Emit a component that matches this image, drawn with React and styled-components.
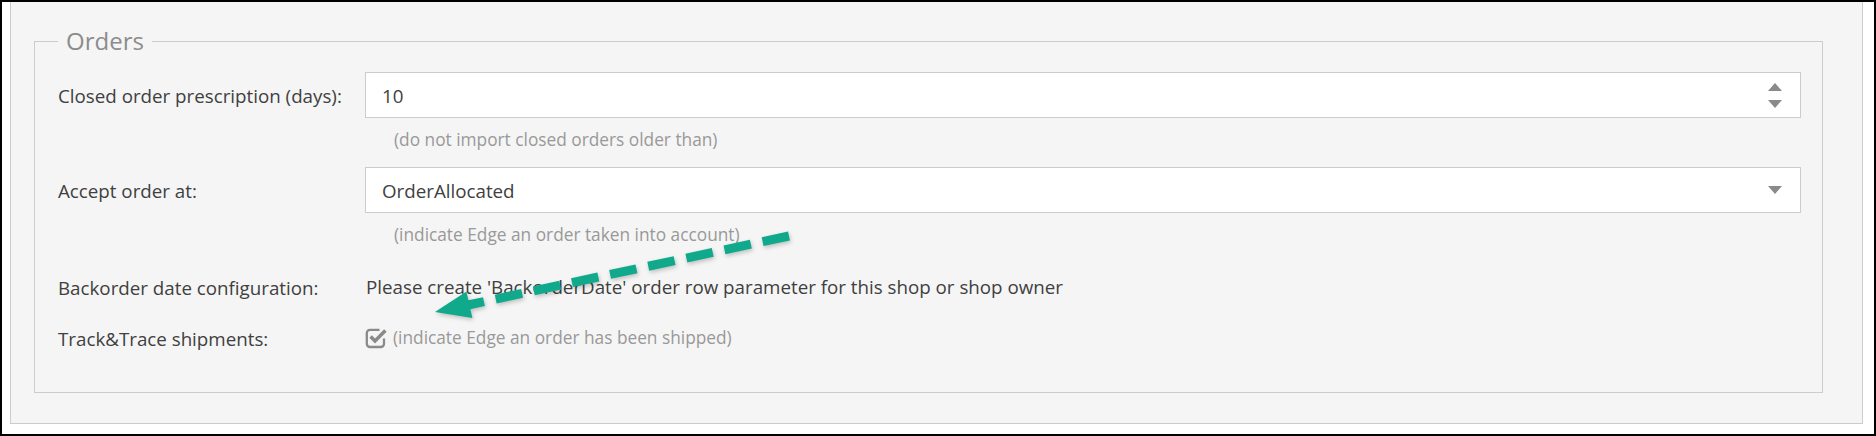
import React from 'react';
import styled, { createGlobalStyle } from 'styled-components';

const GlobalStyle = createGlobalStyle`
  body {
    margin: 0;
    background: #fff;
    font-family: 'Open Sans', 'Liberation Sans', sans-serif;
  }
`;

const rows = [
  { label: 'Closed order prescription (days):', value: '10', kind: 'number', help: '(do not import closed orders older than)' },
  { label: 'Accept order at:', value: 'OrderAllocated', kind: 'select', help: '(indicate Edge an order taken into account)' },
];

const CheckIcon = () => (
  <svg width="22" height="21" viewBox="0 0 22 21">
    <path d="M14.5 1.8 H5 a3.2 3.2 0 0 0 -3.2 3.2 v10.8 a3.2 3.2 0 0 0 3.2 3.2 h10.8 a3.2 3.2 0 0 0 3.2 -3.2 v-5.3"
      stroke="#8a8a8a" strokeWidth="2.3" fill="none" />
    <path d="M5.6 8.6 L10 13 L20.4 2.6" stroke="#8a8a8a" strokeWidth="3.6" fill="none" />
  </svg>
);

const Arrow = () => (
  <Overlay width="1876" height="436" viewBox="0 0 1876 436">
    <line x1="789" y1="236" x2="468" y2="305" stroke="#10a98b" strokeWidth="9"
      strokeDasharray="27 12" strokeLinecap="butt" />
    <polygon points="435,312 466.4,291.5 472.4,318" fill="#10a98b" />
  </Overlay>
);

export default function App() {
  return (
    <>
      <GlobalStyle />
      <Frame>
        <Panel>
          <Fieldset>
            <Legend>Orders</Legend>

            {rows.map((row, i) => (
              <Row key={row.label} $space={i === 0 ? 0 : 15}>
                <Label $tall>{row.label}</Label>
                <Field>
                  <InputBox>
                    <Value>{row.value}</Value>
                    {row.kind === 'number'
                      ? <Spinner><Up /><Down /></Spinner>
                      : <Spinner><Down /></Spinner>}
                  </InputBox>
                  <Help>{row.help}</Help>
                </Field>
              </Row>
            ))}

            <Row $space={28}>
              <Label>Backorder date configuration:</Label>
              <Text>Please create 'BackorderDate' order row parameter for this shop or shop owner</Text>
            </Row>

            <Row $space={27}>
              <Label>Track&amp;Trace shipments:</Label>
              <CheckLine>
                <CheckIcon />
                <Help as="span" $inline>(indicate Edge an order has been shipped)</Help>
              </CheckLine>
            </Row>
          </Fieldset>
        </Panel>
        <Arrow />
      </Frame>
    </>
  );
}

const Frame = styled.div`
  position: relative;
  width: 1876px;
  height: 436px;
  box-sizing: border-box;
  border: 2px solid #000;
  background: #fff;
  display: flex;
  flex-direction: column;
  overflow: hidden;
`;

const Panel = styled.div`
  flex: 1;
  display: flex;
  flex-direction: column;
  margin: 0 11px 10px 8px;
  padding: 22px 39px 30px 23px;
  background: #f5f5f5;
  border: 1px solid #cccccc;
  border-top: none;
`;

const Fieldset = styled.fieldset`
  flex: 1;
  margin: 0;
  min-width: 0;
  padding: 14px 21px 0 23px;
  border: 1px solid #cccccc;
`;

const Legend = styled.legend`
  padding: 0 8px;
  font-size: 24px;
  line-height: 34px;
  color: #8c8c8c;
`;

const Row = styled.div`
  display: grid;
  grid-template-columns: 307px 1fr;
  margin-top: ${p => p.$space}px;
  align-items: center;
`;

const Label = styled.div`
  display: flex;
  align-items: center;
  align-self: start;
  height: ${p => (p.$tall ? '46px' : '24px')};
  font-size: 18.75px;
  color: #404040;
  white-space: nowrap;
`;

const Field = styled.div`
  display: flex;
  flex-direction: column;
`;

const InputBox = styled.div`
  display: flex;
  align-items: center;
  height: 46px;
  box-sizing: border-box;
  padding: 0 18px 0 16px;
  background: #fff;
  border: 1px solid #cccccc;
`;

const Value = styled.span`
  flex: 1;
  font-size: 18.75px;
  color: #404040;
`;

const Spinner = styled.div`
  display: flex;
  flex-direction: column;
  gap: 9px;
`;

const Up = styled.span`
  width: 0;
  height: 0;
  border-left: 7.5px solid transparent;
  border-right: 7.5px solid transparent;
  border-bottom: 8px solid #8a8a8a;
`;

const Down = styled.span`
  width: 0;
  height: 0;
  border-left: 7.5px solid transparent;
  border-right: 7.5px solid transparent;
  border-top: 8px solid #8a8a8a;
`;

const Help = styled.div`
  margin-top: ${p => (p.$inline ? 0 : 10)}px;
  padding-left: ${p => (p.$inline ? 0 : 29)}px;
  font-size: 17.3px;
  line-height: 24px;
  color: #999;
`;

const Text = styled.div`
  padding-left: 1px;
  font-size: 18.75px;
  line-height: 24px;
  color: #404040;
`;

const CheckLine = styled.div`
  display: flex;
  align-items: center;
  gap: 6px;
  height: 24px;
`;

const Overlay = styled.svg`
  position: absolute;
  top: -2px;
  left: -2px;
  pointer-events: none;
  filter: drop-shadow(1px 2px 2px rgba(0, 0, 0, 0.22));
`;
